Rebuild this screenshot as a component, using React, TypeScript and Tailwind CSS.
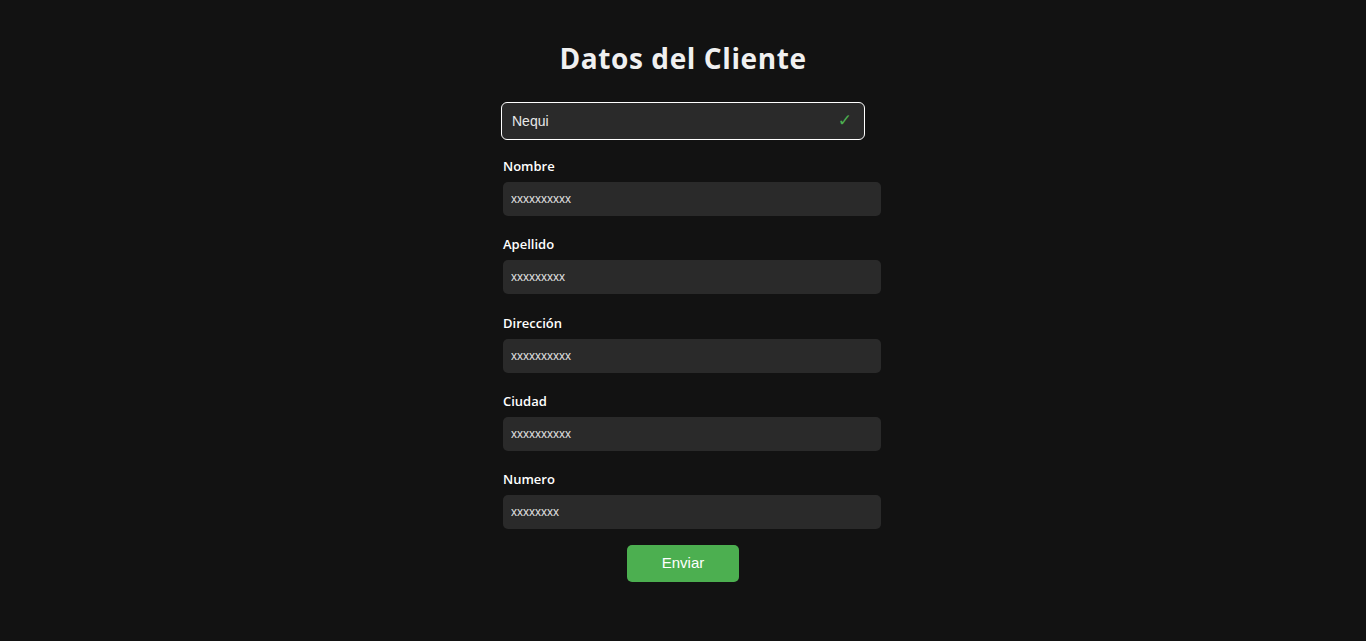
import { useState } from 'react';

const FIELDS = [
	{ label: 'Nombre', value: 'xxxxxxxxxx' },
	{ label: 'Apellido', value: 'xxxxxxxxx' },
	{ label: 'Dirección', value: 'xxxxxxxxxx' },
	{ label: 'Ciudad', value: 'xxxxxxxxxx' },
	{ label: 'Numero', value: 'xxxxxxxx' },
];

export default function App() {
	const [values, setValues] = useState(FIELDS.map((f) => f.value));

	return (
		<div className="min-h-screen w-full bg-[#121212] flex flex-col items-center pt-[38px] font-['Open_Sans',sans-serif]">
			<h1 className="text-[28px] leading-[40px] font-bold tracking-[0.6px] text-[#f0f0f0]">
				Datos del Cliente
			</h1>

			<form className="w-[364px] mt-[24px] flex flex-col" onSubmit={(e) => e.preventDefault()}>
				{/* Payment method */}
				<div className="h-[38px] w-full rounded-[6px] border-[1.5px] border-white bg-[#2a2a2a] flex items-center justify-between pl-[10px] pr-[12px]">
					<span className="text-[14px] text-[#e8e8e8] font-['Liberation_Sans',sans-serif]">Nequi</span>
					<span className="text-[17px] font-bold text-[#4caf50] font-['DejaVu_Sans',sans-serif]">✓</span>
				</div>

				<div className="mt-[16px] flex flex-col">
					{FIELDS.map((f, i) => (
						<div key={f.label} className="flex flex-col pl-[2px] mb-[18.3px]">
							<label className="text-[13px] leading-[20px] font-semibold text-white">{f.label}</label>
							<input
								className="mt-[6px] h-[34px] w-[378px] rounded-[5px] bg-[#2a2a2a] px-[8px] text-[12px] text-[#e0e0e0] outline-none font-['Liberation_Sans',sans-serif]"
								value={values[i]}
								onChange={(e) => setValues(values.map((v, j) => (j === i ? e.target.value : v)))}
							/>
						</div>
					))}
				</div>

				<button
					type="submit"
					className="-mt-[2.5px] self-center h-[37px] w-[112px] rounded-[5px] bg-[#4caf50] text-[15px] text-white font-['Liberation_Sans',sans-serif]"
				>
					Enviar
				</button>
			</form>
		</div>
	);
}
